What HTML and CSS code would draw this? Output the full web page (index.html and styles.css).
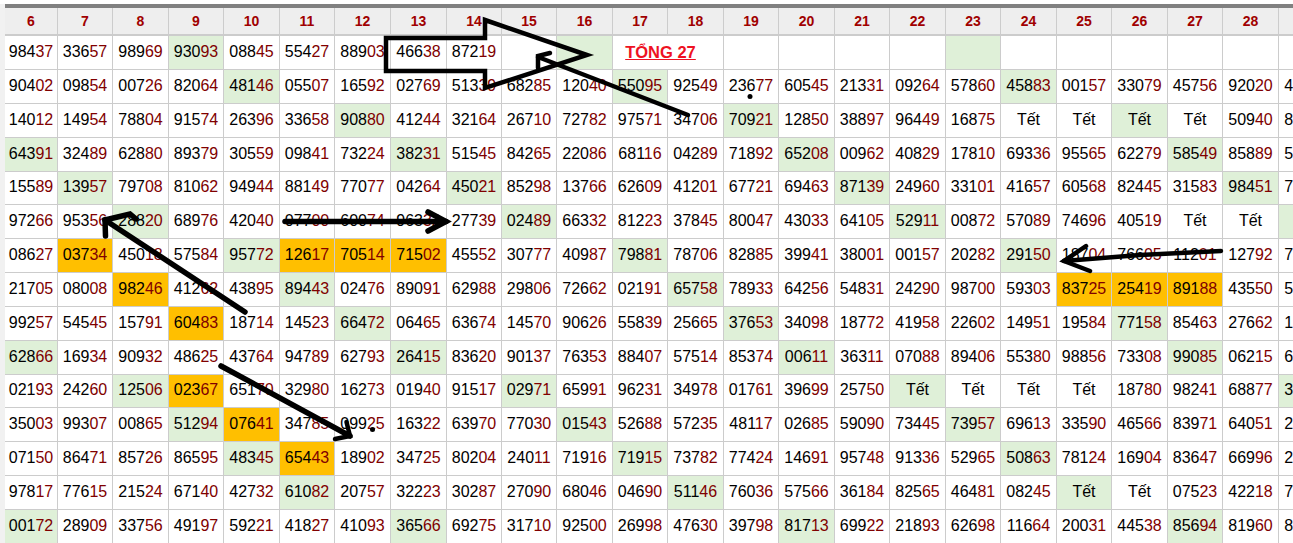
FILE: index.html
```html
<!DOCTYPE html>
<html lang="vi">
<head>
<meta charset="utf-8">
<title>Bảng đặc biệt</title>
<link rel="stylesheet" href="styles.css">
</head>
<body>
<div class="page">
<table class="grid">
<colgroup><col class="c53"><col class="c55"><col class="c56"><col class="c55"><col class="c56"><col class="c55"><col class="c56"><col class="c56"><col class="c55"><col class="c55"><col class="c56"><col class="c55"><col class="c56"><col class="c55"><col class="c56"><col class="c55"><col class="c56"><col class="c55"><col class="c56"><col class="c55"><col class="c56"><col class="c55"><col class="c56"><col class="c56"></colgroup>
<thead><tr><th>6</th><th>7</th><th>8</th><th>9</th><th>10</th><th>11</th><th>12</th><th>13</th><th>14</th><th>15</th><th>16</th><th>17</th><th>18</th><th>19</th><th>20</th><th>21</th><th>22</th><th>23</th><th>24</th><th>25</th><th>26</th><th>27</th><th>28</th><th>29</th></tr></thead>
<tbody>
<tr><td>984<em>37</em></td><td>336<em>57</em></td><td>989<em>69</em></td><td class="g">930<em>93</em></td><td>088<em>45</em></td><td>554<em>27</em></td><td>889<em>03</em></td><td>466<em>38</em></td><td>872<em>19</em></td><td></td><td class="g"></td><td colspan="2" class="total"><span class="total-text">TỔNG 27</span></td><td></td><td></td><td></td><td></td><td class="g"></td><td></td><td></td><td></td><td></td><td></td><td></td></tr>
<tr><td>904<em>02</em></td><td>098<em>54</em></td><td>007<em>26</em></td><td>820<em>64</em></td><td class="g">481<em>46</em></td><td>055<em>07</em></td><td>165<em>92</em></td><td>027<em>69</em></td><td>513<em>39</em></td><td>682<em>85</em></td><td>120<em>40</em></td><td class="g">550<em>95</em></td><td>925<em>49</em></td><td>236<em>77</em></td><td>605<em>45</em></td><td>213<em>31</em></td><td>092<em>64</em></td><td>578<em>60</em></td><td class="g">458<em>83</em></td><td>001<em>57</em></td><td>330<em>79</em></td><td>457<em>56</em></td><td>920<em>20</em></td><td>412<em>35</em></td></tr>
<tr><td>140<em>12</em></td><td>149<em>54</em></td><td>788<em>04</em></td><td>915<em>74</em></td><td>263<em>96</em></td><td>336<em>58</em></td><td class="g">908<em>80</em></td><td>412<em>44</em></td><td>321<em>64</em></td><td>267<em>10</em></td><td>727<em>82</em></td><td>975<em>71</em></td><td>347<em>06</em></td><td class="g">709<em>21</em></td><td>128<em>50</em></td><td>388<em>97</em></td><td>964<em>49</em></td><td>168<em>75</em></td><td>Tết</td><td>Tết</td><td class="g">Tết</td><td>Tết</td><td>509<em>40</em></td><td>823<em>17</em></td></tr>
<tr><td class="g">643<em>91</em></td><td>324<em>89</em></td><td>628<em>80</em></td><td>893<em>79</em></td><td>305<em>59</em></td><td>098<em>41</em></td><td>732<em>24</em></td><td class="g">382<em>31</em></td><td>515<em>45</em></td><td>842<em>65</em></td><td>220<em>86</em></td><td>681<em>16</em></td><td>042<em>89</em></td><td>718<em>92</em></td><td class="g">652<em>08</em></td><td>009<em>62</em></td><td>408<em>29</em></td><td>178<em>10</em></td><td>693<em>36</em></td><td>955<em>65</em></td><td>622<em>79</em></td><td class="g">585<em>49</em></td><td>858<em>89</em></td><td>547<em>26</em></td></tr>
<tr class="short"><td>155<em>89</em></td><td class="g">139<em>57</em></td><td>797<em>08</em></td><td>810<em>62</em></td><td>949<em>44</em></td><td>881<em>49</em></td><td>770<em>77</em></td><td>042<em>64</em></td><td class="g">450<em>21</em></td><td>852<em>98</em></td><td>137<em>66</em></td><td>626<em>09</em></td><td>412<em>01</em></td><td>677<em>21</em></td><td>694<em>63</em></td><td class="g">871<em>39</em></td><td>249<em>60</em></td><td>331<em>01</em></td><td>416<em>57</em></td><td>605<em>68</em></td><td>824<em>45</em></td><td>315<em>83</em></td><td class="g">984<em>51</em></td><td>730<em>14</em></td></tr>
<tr><td>972<em>66</em></td><td>953<em>56</em></td><td class="g">288<em>20</em></td><td>689<em>76</em></td><td>420<em>40</em></td><td>077<em>00</em></td><td>600<em>74</em></td><td>963<em>32</em></td><td>277<em>39</em></td><td class="g">024<em>89</em></td><td>663<em>32</em></td><td>812<em>23</em></td><td>378<em>45</em></td><td>800<em>47</em></td><td>430<em>33</em></td><td>641<em>05</em></td><td class="g">529<em>11</em></td><td>008<em>72</em></td><td>570<em>89</em></td><td>746<em>96</em></td><td>405<em>19</em></td><td>Tết</td><td>Tết</td><td class="g"></td></tr>
<tr><td>086<em>27</em></td><td class="o">037<em>34</em></td><td>450<em>18</em></td><td>575<em>84</em></td><td class="g">957<em>72</em></td><td class="o">126<em>17</em></td><td class="o">705<em>14</em></td><td class="o">715<em>02</em></td><td>455<em>52</em></td><td>307<em>77</em></td><td>409<em>87</em></td><td class="g">798<em>81</em></td><td>787<em>06</em></td><td>828<em>85</em></td><td>399<em>41</em></td><td>380<em>01</em></td><td>001<em>57</em></td><td>202<em>82</em></td><td class="g">291<em>50</em></td><td>187<em>04</em></td><td>766<em>05</em></td><td>112<em>01</em></td><td>127<em>92</em></td><td>746<em>33</em></td></tr>
<tr><td>217<em>05</em></td><td>080<em>08</em></td><td class="o">982<em>46</em></td><td>412<em>62</em></td><td>438<em>95</em></td><td class="g">894<em>43</em></td><td>024<em>76</em></td><td>890<em>91</em></td><td>629<em>88</em></td><td>298<em>06</em></td><td>726<em>62</em></td><td>021<em>91</em></td><td class="g">657<em>58</em></td><td>789<em>33</em></td><td>642<em>56</em></td><td>548<em>31</em></td><td>242<em>90</em></td><td>987<em>00</em></td><td>593<em>03</em></td><td class="o">837<em>25</em></td><td class="o">254<em>19</em></td><td class="o">891<em>88</em></td><td>435<em>50</em></td><td>582<em>47</em></td></tr>
<tr><td>992<em>57</em></td><td>545<em>45</em></td><td>157<em>91</em></td><td class="o">604<em>83</em></td><td>187<em>14</em></td><td>145<em>23</em></td><td class="g">664<em>72</em></td><td>064<em>65</em></td><td>636<em>74</em></td><td>145<em>70</em></td><td>906<em>26</em></td><td>558<em>39</em></td><td>256<em>65</em></td><td class="g">376<em>53</em></td><td>340<em>98</em></td><td>187<em>72</em></td><td>419<em>58</em></td><td>226<em>02</em></td><td>149<em>51</em></td><td>195<em>84</em></td><td class="g">771<em>58</em></td><td>854<em>63</em></td><td>276<em>62</em></td><td>136<em>80</em></td></tr>
<tr><td class="g">628<em>66</em></td><td>169<em>34</em></td><td>909<em>32</em></td><td>486<em>25</em></td><td>437<em>64</em></td><td>947<em>89</em></td><td>627<em>93</em></td><td class="g">264<em>15</em></td><td>836<em>20</em></td><td>901<em>37</em></td><td>763<em>53</em></td><td>884<em>07</em></td><td>575<em>14</em></td><td>853<em>74</em></td><td class="g">006<em>11</em></td><td>363<em>11</em></td><td>070<em>88</em></td><td>894<em>06</em></td><td>553<em>80</em></td><td>988<em>56</em></td><td>733<em>08</em></td><td class="g">990<em>85</em></td><td>062<em>15</em></td><td>671<em>92</em></td></tr>
<tr class="short"><td>021<em>93</em></td><td>242<em>60</em></td><td class="g">125<em>06</em></td><td class="o">023<em>67</em></td><td>651<em>70</em></td><td>329<em>80</em></td><td>162<em>73</em></td><td>019<em>40</em></td><td>915<em>17</em></td><td class="g">029<em>71</em></td><td>659<em>91</em></td><td>962<em>31</em></td><td>349<em>78</em></td><td>017<em>61</em></td><td>396<em>99</em></td><td>257<em>50</em></td><td class="g">Tết</td><td>Tết</td><td>Tết</td><td>Tết</td><td>187<em>80</em></td><td>982<em>41</em></td><td>688<em>77</em></td><td class="g">350<em>24</em></td></tr>
<tr><td>350<em>03</em></td><td>993<em>07</em></td><td>008<em>65</em></td><td class="g">512<em>94</em></td><td class="o">076<em>41</em></td><td>347<em>85</em></td><td>099<em>25</em></td><td>163<em>22</em></td><td>639<em>70</em></td><td>770<em>30</em></td><td class="g">015<em>43</em></td><td>526<em>88</em></td><td>572<em>35</em></td><td>481<em>17</em></td><td>026<em>85</em></td><td>590<em>90</em></td><td>734<em>45</em></td><td class="g">739<em>57</em></td><td>696<em>13</em></td><td>335<em>90</em></td><td>465<em>66</em></td><td>839<em>71</em></td><td>640<em>51</em></td><td>281<em>76</em></td></tr>
<tr><td>071<em>50</em></td><td>864<em>71</em></td><td>857<em>26</em></td><td>865<em>95</em></td><td class="g">483<em>45</em></td><td class="o">654<em>43</em></td><td>189<em>02</em></td><td>347<em>25</em></td><td>802<em>04</em></td><td>240<em>11</em></td><td>719<em>16</em></td><td class="g">719<em>15</em></td><td>737<em>82</em></td><td>774<em>24</em></td><td>146<em>91</em></td><td>957<em>48</em></td><td>913<em>36</em></td><td>529<em>65</em></td><td class="g">508<em>63</em></td><td>781<em>24</em></td><td>169<em>04</em></td><td>836<em>47</em></td><td>669<em>96</em></td><td>204<em>59</em></td></tr>
<tr><td>978<em>17</em></td><td>776<em>15</em></td><td>215<em>24</em></td><td>671<em>40</em></td><td>427<em>32</em></td><td class="g">610<em>82</em></td><td>207<em>57</em></td><td>322<em>23</em></td><td>302<em>87</em></td><td>270<em>90</em></td><td>680<em>46</em></td><td>046<em>90</em></td><td class="g">511<em>46</em></td><td>760<em>36</em></td><td>575<em>66</em></td><td>361<em>84</em></td><td>825<em>65</em></td><td>464<em>81</em></td><td>082<em>45</em></td><td class="g">Tết</td><td>Tết</td><td>075<em>23</em></td><td>422<em>18</em></td><td>793<em>60</em></td></tr>
<tr><td class="g">001<em>72</em></td><td>289<em>09</em></td><td>337<em>56</em></td><td>491<em>97</em></td><td>592<em>21</em></td><td>418<em>27</em></td><td>410<em>93</em></td><td class="g">365<em>66</em></td><td>692<em>75</em></td><td>317<em>10</em></td><td>925<em>00</em></td><td>269<em>98</em></td><td>476<em>30</em></td><td>397<em>98</em></td><td class="g">817<em>13</em></td><td>699<em>22</em></td><td>218<em>93</em></td><td>626<em>98</em></td><td>116<em>64</em></td><td>200<em>31</em></td><td>445<em>38</em></td><td class="g">856<em>94</em></td><td>819<em>60</em></td><td>850<em>47</em></td></tr>
</tbody>
</table>
<svg class="marks" width="1293" height="543" viewBox="0 0 1293 543" aria-hidden="true">
<polygon class="thin" points="485,20 587,55 485,88 485,71 386,71 386,38 485,38"/>
<polyline class="thin" points="688,115 538,57"/>
<polyline class="thin" points="550,53 538,56 538,68"/>
<polyline class="thick" points="245,312 105,220"/>
<polyline class="thick" points="136,219 130,214 105,220 105.5,236"/>
<polyline class="thick" points="285,221.5 446,221.5"/>
<polyline class="thick" points="428,212 446,221.5 428,231"/>
<polyline class="thin" points="1221,251 1140,255 1064,261"/>
<polyline class="thin" points="1086,246 1064,261 1090,271"/>
<polyline class="thick" points="221,366 350,436"/>
<polyline class="thin" points="346.5,422 350,436 335,439"/>
<circle cx="372.5" cy="429.5" r="2.5"/>
<circle cx="750" cy="96.5" r="2.5"/>
</svg>
</div>
</body>
</html>
```
FILE: styles.css
```css
html, body {
  margin: 0;
  padding: 0;
  background: #fff;
}

.page {
  position: relative;
  width: 1293px;
  height: 543px;
  overflow: hidden;
  padding: 4px 0 0 5px;
  box-sizing: border-box;
  background: linear-gradient(#fff, #fff) 0 0 / 100% 4px no-repeat, #f1f1f1;
}

.grid {
  table-layout: fixed;
  width: 1330px;
  border-collapse: separate;
  border-spacing: 0;
  border-top: 4px solid #808080;
  background: #fff;
  font-family: "Liberation Sans", Arial, sans-serif;
  font-size: 16px;
  color: #000;
}

.c53 { width: 53px; }
.c55 { width: 55px; }
.c56 { width: 56px; }

.grid th,
.grid td {
  box-sizing: border-box;
  padding: 0;
  text-align: center;
  white-space: nowrap;
  overflow: hidden;
  border-right: 1px solid #ccc;
  border-bottom: 1px solid #ccc;
}

.grid th {
  height: 28px;
  background: #eee;
  color: #a00000;
  font-size: 14px;
  font-weight: bold;
  border-bottom-width: 2px;
}

.grid td {
  height: 34px;
  padding-bottom: 2px;
}

.grid tr.short td {
  height: 33px;
}

.grid em {
  font-style: normal;
  color: #800000;
}

.grid td.g { background: #dff0d8; }
.grid td.o { background: #ffbf00; }

.grid td.total {
  padding: 0 15px 0 0;
}

.total-text {
  color: #ee1122;
  font-size: 16.5px;
  font-weight: bold;
  text-decoration: underline;
}

.marks {
  position: absolute;
  left: 0;
  top: 0;
}

.marks polygon,
.marks polyline {
  fill: none;
  stroke: #000;
  stroke-linecap: round;
  stroke-linejoin: miter;
}

.marks .thin { stroke-width: 4.5; }
.marks .thick { stroke-width: 5.5; }
.marks circle { fill: #000; }
```
